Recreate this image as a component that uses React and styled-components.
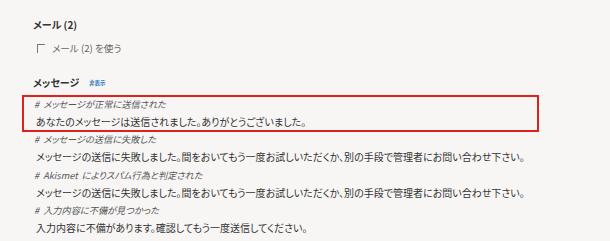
import React from "react";
import styled, { createGlobalStyle } from "styled-components";

const Global = createGlobalStyle`
  html, body { margin: 0; padding: 0; background: #f7f6f5; }
  body { font-family: "Noto Sans CJK JP", "Noto Sans", sans-serif; color: #333; }
`;

const Page = styled.div`
  width: 610px;
  height: 241px;
  padding: 17px 0 0 23px;
  box-sizing: border-box;
  overflow: hidden;
  font-feature-settings: "palt";
`;

const Heading = styled.h3`
  margin: 0 0 0 10px;
  font-size: 10px;
  line-height: 16px;
  font-weight: bold;
  color: #333;
  display: flex;
  align-items: center;
  gap: 10px;
`;

const ToggleLink = styled.a`
  font-size: 5.4px;
  font-weight: bold;
  color: #2b7bbf;
  text-decoration: none;
  margin-top: 1px;
`;

const CheckRow = styled.label`
  display: flex;
  align-items: center;
  gap: 7px;
  margin: 7px 0 18px 14px;
  line-height: 16px;
  font-size: 9.6px;
  color: #666;
`;

const Check = styled.span`
  width: 7px;
  height: 8px;
  border-top: 1px solid #7a7570;
  border-left: 1px solid #7a7570;
`;

const List = styled.div`
  margin-top: 5px;
  width: 515px;
`;

const Item = styled.div`
  padding-left: 11px;
  outline: ${(p) => (p.$active ? "2px solid #e0201c" : "none")};
  outline-offset: -1px;
`;

const Comment = styled.div`
  font-size: 9.2px;
  line-height: 17px;
  font-style: italic;
  color: #555;
  word-spacing: 2px;
`;

const Message = styled.div`
  font-size: 10px;
  line-height: 18.3px;
  padding-left: 2px;
  color: #333;
  white-space: nowrap;
`;

const fail = "メッセージの送信に失敗しました。間をおいてもう一度お試しいただくか、別の手段で管理者にお問い合わせ下さい。";

const items = [
  { c: "# メッセージが正常に送信された", m: "あなたのメッセージは送信されました。ありがとうございました。", active: true },
  { c: "# メッセージの送信に失敗した", m: fail },
  { c: "# Akismet によりスパム行為と判定された", m: fail },
  { c: "# 入力内容に不備が見つかった", m: "入力内容に不備があります。確認してもう一度送信してください。" },
];

export default function App() {
  return (
    <Page>
      <Global />
      <Heading>メール (2)</Heading>
      <CheckRow>
        <Check />
        メール (2) を使う
      </CheckRow>
      <Heading>
        メッセージ <ToggleLink href="#">非表示</ToggleLink>
      </Heading>
      <List>
        {items.map((it, i) => (
          <Item key={i} $active={it.active}>
            <Comment>{it.c}</Comment>
            <Message>{it.m}</Message>
          </Item>
        ))}
      </List>
    </Page>
  );
}
